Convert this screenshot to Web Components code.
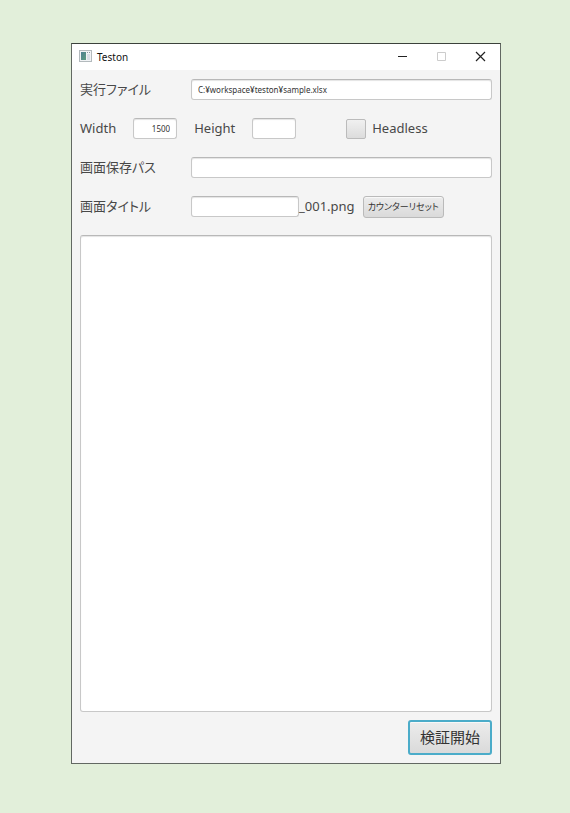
<!DOCTYPE html>
<html lang="ja">
<head>
<meta charset="UTF-8">
<meta name="viewport" content="width=device-width, initial-scale=1">
<title>Teston</title>
<style>
    body {
        margin: 0;
        min-height: 100vh;
        box-sizing: border-box;
        display: flex;
        padding: 43px 69px 49px 71px;
        background: #e2efda;
        color: #484848;
        font: 13px/20px "Noto Sans", "Noto Sans CJK JP", sans-serif;
        font-feature-settings: "palt";
    }
</style>
</head>
<body>
<app-window heading="Teston">
    <form-row><text-field label="実行ファイル" name="file" value="C:¥workspace¥teston¥sample.xlsx"></text-field></form-row>
    <form-row>
        <text-field size="small" label="Width" name="width" value="1500"></text-field>
        <text-field size="small" label="Height" name="height"></text-field>
        <check-field label="Headless"></check-field>
    </form-row>
    <form-row><text-field label="画面保存パス" name="path"></text-field></form-row>
    <form-row>
        <text-field size="medium" label="画面タイトル" name="title" suffix="_001.png"></text-field>
        <push-button>カウンターリセット</push-button>
    </form-row>
    <log-area label="ログ"></log-area>
    <push-button slot="footer" primary>検証開始</push-button>
</app-window>

<script>
class AppWindow extends HTMLElement {
    constructor() {
        super();
        this.attachShadow({ mode: 'open' });
    }

    connectedCallback() {
        this.shadowRoot.innerHTML = `
            <style>
                :host {
                    flex: 1;
                    min-width: 0;
                    display: flex;
                    flex-direction: column;
                    box-sizing: border-box;
                    border: 1px solid #626862;
                    border-top-color: #3b413b;
                    background: #f4f4f4;
                }
                header {
                    display: flex;
                    align-items: center;
                    height: 26px;
                    padding-left: 7px;
                    background: #fff;
                }
                .icon { width: 13px; height: 12px; padding-bottom: 2px; }
                h1 {
                    flex: 1;
                    margin: 0 0 0 5px;
                    color: #111;
                    font-size: 10px;
                    font-weight: normal;
                }
                .control {
                    display: flex;
                    align-items: center;
                    justify-content: center;
                    width: 39px;
                    height: 26px;
                    padding: 0 0 2px;
                    border: 0;
                    background: none;
                    color: #222;
                }
                .control:disabled { color: #ccc; }
                .control svg { width: 11px; height: 11px; }
                main {
                    flex: 1;
                    display: flex;
                    flex-direction: column;
                    gap: 18px;
                    padding: 9px 8px 8px;
                }
                footer {
                    display: flex;
                    justify-content: flex-end;
                    padding: 0 8px 8px;
                }
            </style>
            <header>
                <svg class="icon" viewBox="0 0 13 12" aria-hidden="true">
                    <defs>
                        <linearGradient id="pane" x1="0" y1="0" x2="1" y2="1">
                            <stop offset="0" stop-color="#4d7f91"/>
                            <stop offset="1" stop-color="#5d9c80"/>
                        </linearGradient>
                    </defs>
                    <rect x=".5" y=".5" width="12" height="11" fill="#f1f3f5" stroke="#b3babd"/>
                    <rect x="2" y="2" width="5" height="8" fill="url(#pane)"/>
                    <rect x="8" y="4" width="3" height="6" fill="#d9dfe6"/>
                    <path d="M8 2.500h1M10 2.500h1" stroke="#8b9aa3"/>
                </svg>
                <h1>${this.getAttribute('heading') || ''}</h1>
                <button class="control" type="button" aria-label="最小化">
                    <svg viewBox="0 0 11 11"><path d="M1 5.5h9" stroke="currentColor"/></svg>
                </button>
                <button class="control" type="button" aria-label="最大化" disabled>
                    <svg viewBox="0 0 11 11"><path d="M1.5 1.5h8v8h-8z" fill="none" stroke="currentColor"/></svg>
                </button>
                <button class="control" type="button" aria-label="閉じる">
                    <svg viewBox="0 0 11 11"><path d="M1 1l9 9M10 1l-9 9" stroke="currentColor" stroke-width="1.2"/></svg>
                </button>
            </header>
            <main><slot></slot></main>
            <footer><slot name="footer"></slot></footer>
        `;
    }
}

class FormRow extends HTMLElement {
    constructor() {
        super();
        this.attachShadow({ mode: 'open' });
        this.shadowRoot.innerHTML = `
            <style>
                :host {
                    display: flex;
                    align-items: center;
                    height: 21px;
                }
            </style>
            <slot></slot>
        `;
    }
}

class TextField extends HTMLElement {
    constructor() {
        super();
        this.attachShadow({ mode: 'open' });
    }

    connectedCallback() {
        const suffix = this.getAttribute('suffix');

        this.shadowRoot.innerHTML = `
            <style>
                :host {
                    display: flex;
                    align-items: center;
                    flex: 1;
                    min-width: 0;
                }
                label, span { padding-bottom: 2px; }
                label {
                    flex: none;
                    width: 111px;
                    white-space: nowrap;
                }
                input {
                    flex: 1;
                    min-width: 0;
                    height: 21px;
                    box-sizing: border-box;
                    padding: 0 6px;
                    border: 1px solid #c8c8c8;
                    border-top-color: #b8b8b8;
                    border-radius: 3px;
                    background: #fff;
                    box-shadow: inset 0 1px 1px #e4e4e4;
                    color: #333;
                    font: inherit;
                    font-size: 8px;
                    outline: none;
                }
                :host([size="small"]) { flex: none; margin-right: 17px; }
                :host([size="small"]) label { width: auto; margin-right: 17px; }
                :host([size="small"]) input { flex: none; width: 44px; text-align: right; }
                :host([size="medium"]) { flex: none; margin-right: 8px; }
                :host([size="medium"]) input { flex: none; width: 108px; }
            </style>
            <label for="input">${this.getAttribute('label') || ''}</label>
            <input id="input" type="text" name="${this.getAttribute('name') || ''}" value="${this.getAttribute('value') || ''}">
            ${suffix ? `<span>${suffix}</span>` : ''}
        `;
    }
}

class CheckField extends HTMLElement {
    constructor() {
        super();
        this.attachShadow({ mode: 'open' });
    }

    connectedCallback() {
        this.shadowRoot.innerHTML = `
            <style>
                :host {
                    display: flex;
                    align-items: center;
                    gap: 6px;
                    margin-left: 33px;
                }
                label { padding-bottom: 2px; }
                input {
                    appearance: none;
                    width: 20px;
                    height: 20px;
                    margin: 0;
                    border: 1px solid #bbb;
                    border-radius: 2px;
                    background: linear-gradient(#f0f0f0, #dcdcdc);
                }
                input:checked { background: #777; }
            </style>
            <input id="check" type="checkbox">
            <label for="check">${this.getAttribute('label') || ''}</label>
        `;
    }
}

class PushButton extends HTMLElement {
    constructor() {
        super();
        this.attachShadow({ mode: 'open' });
        this.shadowRoot.innerHTML = `
            <style>
                :host { display: block; }
                button {
                    display: block;
                    height: 22px;
                    padding: 0 4px 2px;
                    border: 1px solid #bababa;
                    border-radius: 3px;
                    background: linear-gradient(#ececec, #dadada);
                    box-shadow: inset 0 1px #f8f8f8;
                    color: #333;
                    font: inherit;
                    font-size: 9px;
                    font-feature-settings: inherit;
                    white-space: nowrap;
                }
                :host([primary]) button {
                    height: 35px;
                    padding: 0 10px 2px;
                    border: 2px solid #4bacc9;
                    font-size: 15px;
                }
            </style>
            <button type="button"><slot></slot></button>
        `;
    }
}

class LogArea extends HTMLElement {
    constructor() {
        super();
        this.attachShadow({ mode: 'open' });
    }

    connectedCallback() {
        this.shadowRoot.innerHTML = `
            <style>
                :host {
                    display: flex;
                    flex: 1;
                    min-height: 120px;
                }
                textarea {
                    flex: 1;
                    min-width: 0;
                    box-sizing: border-box;
                    margin: 0;
                    padding: 6px;
                    border: 1px solid #c8c8c8;
                    border-top-color: #b8b8b8;
                    border-radius: 3px;
                    background: #fff;
                    box-shadow: inset 0 1px 1px #e4e4e4;
                    color: #333;
                    font: inherit;
                    font-size: 8px;
                    resize: none;
                    outline: none;
                }
            </style>
            <textarea aria-label="${this.getAttribute('label') || ''}" readonly></textarea>
        `;
    }
}

customElements.define('app-window', AppWindow);
customElements.define('form-row', FormRow);
customElements.define('text-field', TextField);
customElements.define('check-field', CheckField);
customElements.define('push-button', PushButton);
customElements.define('log-area', LogArea);
</script>
</body>
</html>
